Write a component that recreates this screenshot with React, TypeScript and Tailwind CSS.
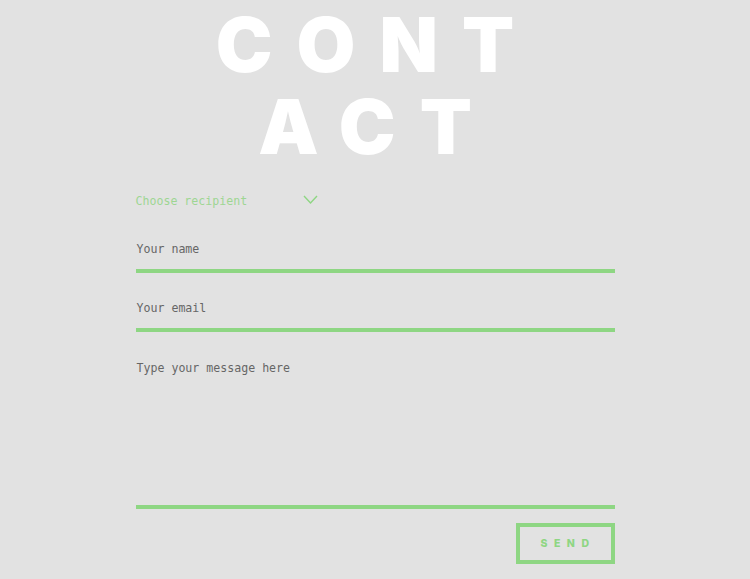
import React from "react";

export default function App() {
  const mono = { fontFamily: '"DejaVu Sans Mono", monospace' } as React.CSSProperties;
  return (
    <div className="min-h-[579px] w-full bg-[#e2e2e2] overflow-hidden">
      <h1
        className="text-center text-white font-black text-[76px] leading-[82px] tracking-[24px] pl-[4px] pt-[3px]"
        style={{ fontFamily: 'Inter, sans-serif' }}
      >
        <div>CONT</div>
        <div>ACT</div>
      </h1>
      <form className="mx-auto w-[479px] mt-[23px]" style={mono}>
        <div className="relative w-[182px] h-[24px] flex items-center">
          <span className="text-[11.6px] text-[#9ed693]">Choose recipient</span>
          <svg className="absolute right-0 top-[5px]" width="15" height="10" viewBox="0 0 15 10">
            <polyline points="1,1 7.5,8 14,1" fill="none" stroke="#8ed683" strokeWidth="1.4" />
          </svg>
        </div>
        <div className="mt-[24px] h-[24px] flex items-center pl-[1px] text-[11.6px] text-[#666666]">Your name</div>
        <div className="mt-[7px] h-[4px] bg-[#8ed683]" />
        <div className="mt-[24px] h-[24px] flex items-center pl-[1px] text-[11.6px] text-[#666666]">Your email</div>
        <div className="mt-[7px] h-[4px] bg-[#8ed683]" />
        <div className="mt-[24px] h-[149px] pl-[1px] pt-[4px] text-[11.6px] text-[#666666]">Type your message here</div>
        <div className="h-[4px] bg-[#8ed683]" />
        <div className="flex justify-end mt-[14px]">
          <button
            type="button"
            className="w-[99px] h-[41px] border-[4px] border-[#8ed683] text-[#8ed683] text-[10.5px] font-extrabold tracking-[6.5px] pl-[6px]"
            style={{ fontFamily: 'Inter, sans-serif' }}
          >
            SEND
          </button>
        </div>
      </form>
    </div>
  );
}
